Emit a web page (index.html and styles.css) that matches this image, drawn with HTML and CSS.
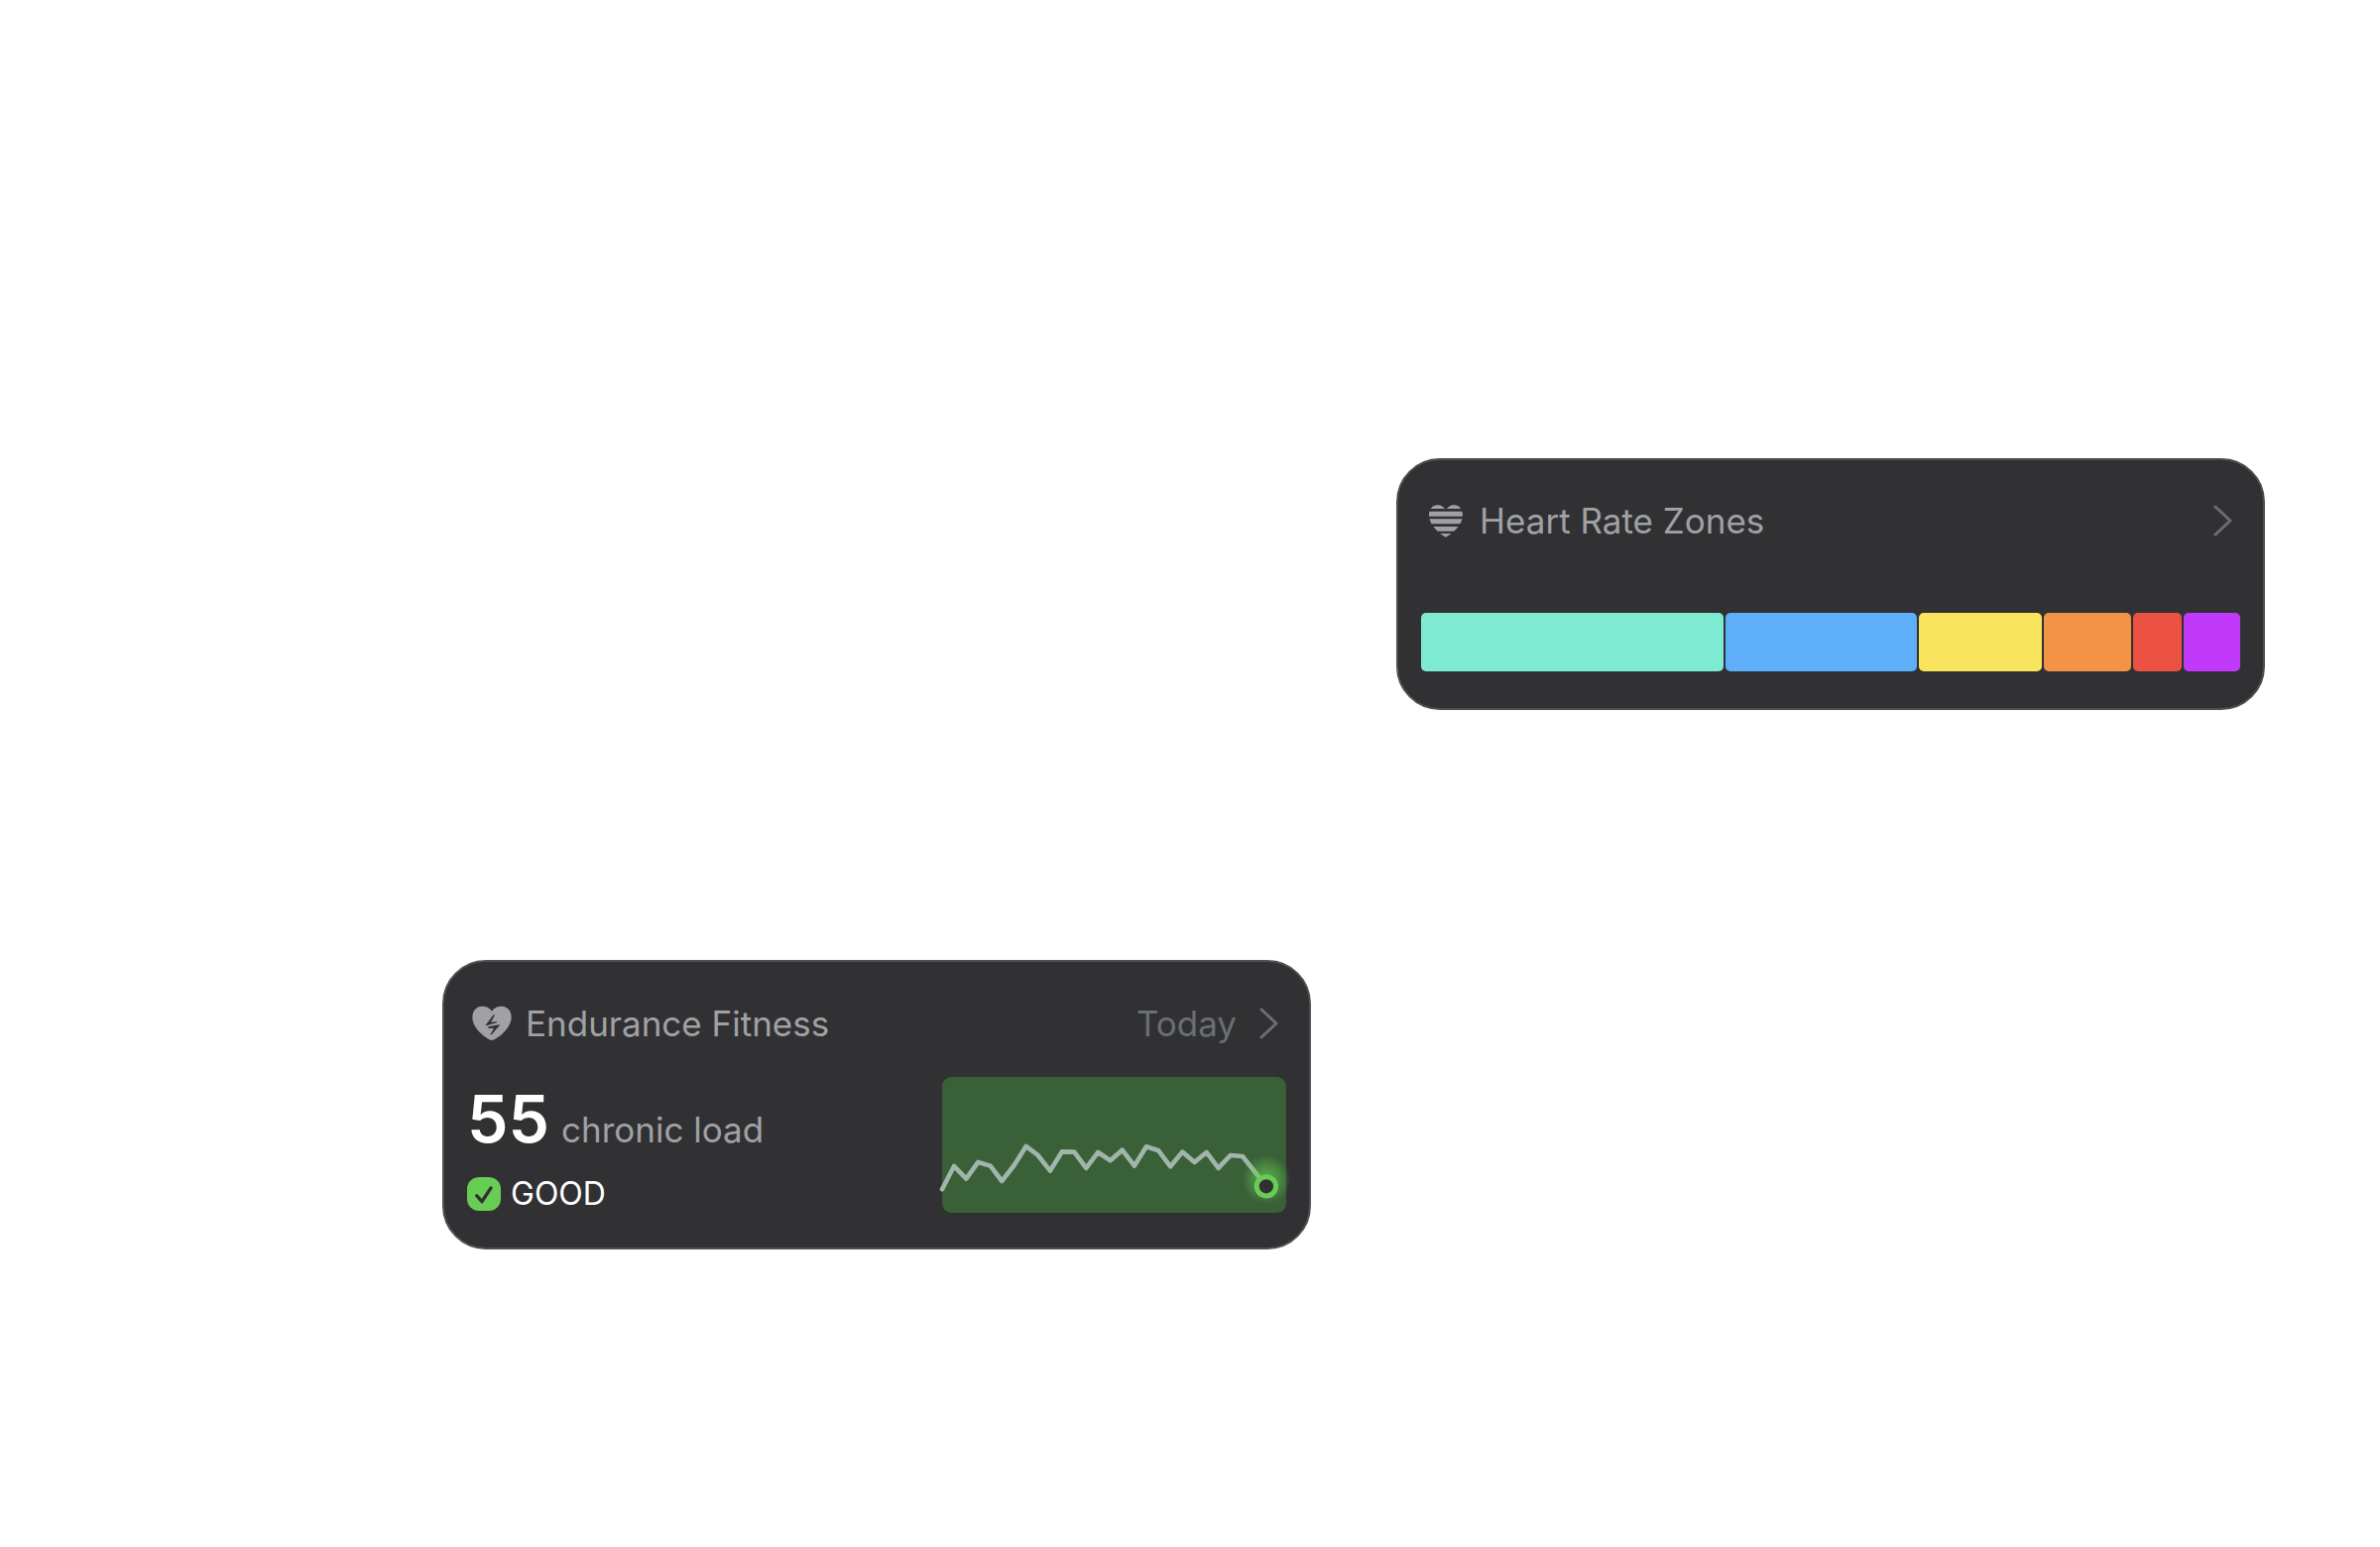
FILE: index.html
```html
<!DOCTYPE html>
<html lang="en">
<head>
    <meta charset="UTF-8">
    <meta name="viewport" content="width=device-width, initial-scale=1.0">
    <title>Fitness Widgets</title>

    <link rel="stylesheet" href="styles.css">
</head>
<body>
    <main class="board">
        <section class="card zones">
            <div class="card-header">
                <svg class="card-icon" viewBox="0 0 120 120">
                    <clipPath id="stripes">
                        <path d="M0 10h120v14H0zM0 32h120v15H0zM0 55h120v15H0zM0 78h120v14H0zM0 99h120v14H0z"/>
                    </clipPath>
                    <path clip-path="url(#stripes)" d="M60 110C50 107 9 77 9 43C9 25 20 13 35 13C46 13 55 19 60 28C65 19 74 13 85 13C100 13 111 25 111 43C111 77 70 107 60 110Z"/>
                </svg>
                <h2 class="card-title">Heart Rate Zones</h2>
                <button class="card-open" type="button" aria-label="Open heart rate zones">
                    <svg class="chevron" viewBox="0 0 20 32"><path d="M3 2l15 14L3 30"/></svg>
                </button>
            </div>
            <div class="zone-bar">
                <div class="zone zone-1" style="flex-grow: 305"></div>
                <div class="zone zone-2" style="flex-grow: 193"></div>
                <div class="zone zone-3" style="flex-grow: 124"></div>
                <div class="zone zone-4" style="flex-grow: 88"></div>
                <div class="zone zone-5" style="flex-grow: 49"></div>
                <div class="zone zone-6" style="flex-grow: 57"></div>
            </div>
        </section>

        <section class="card endurance">
            <div class="card-header">
                <svg class="card-icon" viewBox="0 0 120 120">
                    <path fill-rule="evenodd" d="M60 111C48 109 1 78 1 41C1 21 14 8 31 8C43 8 53 13 60 23C67 13 77 8 89 8C106 8 119 21 119 41C119 78 72 109 60 111ZM65 34L41 65Q40 68 43 67L75 58Q76 55 73 55L57 56L68 37Q69 33 65 34ZM82 64L50 70Q46 72 49 74L66 75L56 92Q55 96 59 94L83 67Q84 64 82 64Z"/>
                </svg>
                <h2 class="card-title">Endurance Fitness</h2>
                <span class="card-date">Today</span>
                <button class="card-open" type="button" aria-label="Open endurance fitness">
                    <svg class="chevron" viewBox="0 0 20 32"><path d="M3 2l15 14L3 30"/></svg>
                </button>
            </div>
            <div class="card-body">
                <div class="stats">
                    <p class="load"><strong class="load-value">55</strong> <span class="load-unit">chronic load</span></p>
                    <p class="status">
                        <svg class="status-icon" viewBox="0 0 102 102">
                            <rect width="102" height="102" rx="36"/>
                            <path d="M29 56l16 18L72 33"/>
                        </svg>
                        GOOD
                    </p>
                </div>
                <svg class="chart" viewBox="0 0 1041 411">
                    <defs>
                        <radialGradient id="glow">
                            <stop offset="0" stop-color="#66cf52" stop-opacity="0.7"/>
                            <stop offset="0.5" stop-color="#66cf52" stop-opacity="0.4"/>
                            <stop offset="1" stop-color="#66cf52" stop-opacity="0"/>
                        </radialGradient>
                    </defs>
                    <rect class="chart-bg" width="1041" height="411" rx="28"/>
                    <polyline class="chart-line" points="0,340 36,270 73,308 109,258 146,269 181,315 218,267 254,210 290,237 327,284 363,226 400,227 436,276 472,228 509,253 545,221 582,269 618,211 655,223 691,271 727,227 764,258 800,228 836,276 873,237 909,240 981,331"/>
                    <circle cx="981" cy="310" r="74" fill="url(#glow)"/>
                    <circle class="chart-dot" cx="981" cy="331" r="29"/>
                </svg>
            </div>
        </section>
    </main>
</body>
</html>
```

FILE: styles.css
```css
* {
    margin: 0;
    padding: 0;
    box-sizing: border-box;
}

body {
    background-color: #fff;
    font-family: Inter, "Liberation Sans", sans-serif;
}

/* two columns, the cards sit on a diagonal */
.board {
    display: grid;
    grid-template-columns: 1fr 1fr;
    gap: 252px 86px;
    padding: 462px 116px 300px 446px;
}

.card {
    background-color: #313133;
    border: 2px solid #4f5051;
    border-radius: 44px;
    padding: 39px 23px;
    color: #9fa1a5;
}

.zones {
    grid-column: 2;
    padding-bottom: 37px;
}

.endurance {
    grid-column: 1;
    padding-top: 40px;
    padding-bottom: 35px;
}

.card-header {
    display: flex;
    align-items: center;
    padding: 0 8px 0 5px;
    height: 44px;
}

.card-icon {
    width: 40px;
    height: 40px;
    margin-right: 14px;
    fill: #a0a1a6;
}

.card-title {
    flex: 1;
    font-size: 35px;
    line-height: 44px;
    font-weight: 400;
}

.card-date {
    margin-right: 22px;
    font-size: 35px;
    line-height: 44px;
    color: #697071;
}

.card-open {
    display: flex;
    border: none;
    background: none;
    cursor: pointer;
}

.chevron {
    width: 20px;
    height: 32px;
    fill: none;
    stroke: #697071;
    stroke-width: 3;
    stroke-linecap: round;
    stroke-linejoin: round;
}

/* heart rate zones */
.zone-bar {
    display: flex;
    gap: 2px;
    height: 59px;
    margin-top: 71px;
}

.zone {
    flex: 1 1 0;
    border-radius: 5px;
}

.zone-1 { background-color: #7dead1; }
.zone-2 { background-color: #5eaef9; }
.zone-3 { background-color: #f8e45d; }
.zone-4 { background-color: #f29345; }
.zone-5 { background-color: #eb5242; }
.zone-6 { background-color: #c139fa; }

/* endurance fitness */
.card-body {
    display: flex;
    justify-content: space-between;
    align-items: flex-start;
    margin-top: 32px;
}

.load {
    display: flex;
    align-items: baseline;
    gap: 12px;
    white-space: nowrap;
}

.load-value {
    font-size: 66px;
    line-height: 84px;
    font-weight: 600;
    color: #fff;
}

.load-unit {
    font-size: 35px;
    line-height: 44px;
}

.status {
    display: flex;
    align-items: center;
    gap: 10px;
    margin-top: 15px;
    font-size: 32px;
    line-height: 38px;
    color: #fff;
}

.status-icon {
    width: 34px;
    height: 34px;
    fill: #68cd55;
}

.status-icon path {
    fill: none;
    stroke: #313133;
    stroke-width: 10;
    stroke-linecap: round;
    stroke-linejoin: round;
}

.chart {
    width: 42%;
    overflow: visible;
}

.chart-bg {
    fill: #3a6038;
}

.chart-line {
    fill: none;
    stroke: #a0b5ab;
    stroke-width: 14;
    stroke-linecap: round;
    stroke-linejoin: round;
}

.chart-dot {
    fill: #313133;
    stroke: #68cd55;
    stroke-width: 15;
}
```
